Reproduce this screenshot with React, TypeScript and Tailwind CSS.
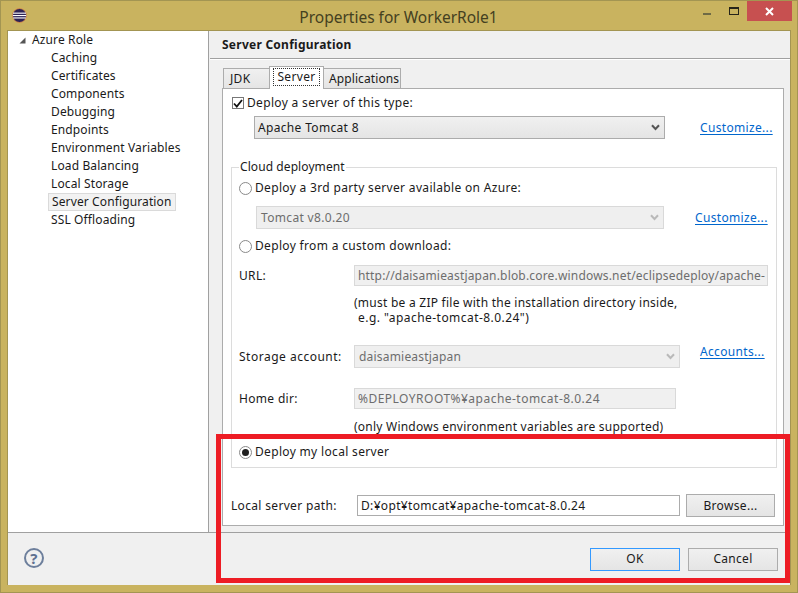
const navItems = [
  'Caching',
  'Certificates',
  'Components',
  'Debugging',
  'Endpoints',
  'Environment Variables',
  'Load Balancing',
  'Local Storage',
  'Server Configuration',
  'SSL Offloading',
];

function Chevron({ disabled }: { disabled?: boolean }) {
  return (
    <svg width="9" height="7" viewBox="0 0 9 7" className="shrink-0">
      <path d="M1 1.2 L4.5 5 L8 1.2" fill="none" stroke={disabled ? '#b9b9b9' : '#555555'} strokeWidth="2" />
    </svg>
  );
}

function Radio({ checked }: { checked?: boolean }) {
  return (
    <span className="flex h-[13px] w-[13px] shrink-0 items-center justify-center rounded-full border border-[#8a8a8a] bg-white">
      {checked && <span className="h-[7px] w-[7px] rounded-full bg-[#1f1f1f]" />}
    </span>
  );
}

function CustomLink({ children }: { children: string }) {
  return <a className="cursor-pointer text-[#0066cc] underline underline-offset-2">{children}</a>;
}

function ComboBox({ value, disabled, className }: { value: string; disabled?: boolean; className: string }) {
  return (
    <div
      className={
        'flex h-[23px] items-center justify-between border pr-[4px] ' +
        (disabled
          ? 'border-[#d9d9d9] bg-[#efefef] pl-[4px] text-[#6d6d6d] '
          : 'border-[#acacac] bg-gradient-to-b from-[#f0f0f0] to-[#e5e5e5] pl-[3px] ') +
        className
      }
    >
      <span>{value}</span>
      <Chevron disabled={disabled} />
    </div>
  );
}

function ReadOnlyField({ value, className }: { value: string; className: string }) {
  return (
    <div className={'flex h-[21px] items-center overflow-hidden whitespace-nowrap border border-[#d9d9d9] bg-[#f0f0f0] pl-[3px] text-[#6d6d6d] ' + className}>
      {value}
    </div>
  );
}

function DialogButton({ label, focused, className }: { label: string; focused?: boolean; className: string }) {
  return (
    <button
      className={
        'h-[23px] border bg-gradient-to-b from-[#f0f0f0] to-[#e5e5e5] ' +
        (focused ? 'border-[#3399ff] ' : 'border-[#acacac] ') +
        className
      }
    >
      {label}
    </button>
  );
}

function EclipseLogo() {
  return (
    <svg width="15" height="15" viewBox="0 0 15 15">
      <circle cx="7.5" cy="7.5" r="7" fill="#2c2255" stroke="#e8964a" strokeWidth="0.8" />
      <rect x="1" y="4.6" width="13" height="1.1" fill="#ffffff" />
      <rect x="0.8" y="7" width="13.4" height="1.1" fill="#ffffff" />
      <rect x="1.2" y="9.4" width="12.6" height="1.1" fill="#ffffff" />
    </svg>
  );
}

export default function App() {
  return (
    <div className="relative flex h-[593px] w-[798px] flex-col overflow-hidden border border-[#a39552] bg-[#c9b35f] font-['Noto_Sans',sans-serif] text-[12px] leading-none text-[#1a1a1a]">
      {/* title bar */}
      <div className="flex h-[29px] shrink-0 items-start">
        <div className="ml-[11px] mt-[7px]">
          <EclipseLogo />
        </div>
        <div className="flex-1 pl-[67px] pt-[6px] text-center text-[15.5px] leading-[20px] text-[#44401f]">Properties for WorkerRole1</div>
        <div className="flex items-start">
          <div className="mr-[18px] mt-[12px] h-[2px] w-[8px] bg-[#6f6a45]" />
          <div className="mr-[8px] mt-[6px] h-[8px] w-[10px] border border-t-2 border-[#26241a]" />
          <div className="flex h-[20px] w-[45px] items-center justify-center bg-[#c75050] text-white">
            <svg width="9" height="9" viewBox="0 0 9 9">
              <path d="M1 1 L8 8 M8 1 L1 8" stroke="#ffffff" strokeWidth="2" />
            </svg>
          </div>
          <div className="w-[5px]" />
        </div>
      </div>

      {/* client area */}
      <div className="mx-[6px] flex min-h-0 flex-1 flex-col border-l border-r border-t border-[#a39552] bg-[#f0f0f0]">
        <div className="flex h-[501px] shrink-0">
          {/* tree */}
          <div className="w-[201px] shrink-0 border-r border-[#a0a0a0] bg-white tracking-[0.12px]">
            <div className="flex h-[18px] items-center">
              <svg width="7" height="7" viewBox="0 0 7 7" className="ml-[11px] mr-[6px]">
                <path d="M6.5 0.5 V6.5 H0.5 Z" fill="#555555" />
              </svg>
              <span>Azure Role</span>
            </div>
            <ul>
              {navItems.map((item) => (
                <li key={item} className="flex h-[18px] items-center pl-[40px]">
                  <span
                    className={
                      'flex h-[18px] items-center px-[3px] ' +
                      (item === 'Server Configuration' ? 'border border-[#dadada] bg-[#f2f2f2] px-[3px]' : '')
                    }
                  >
                    {item}
                  </span>
                </li>
              ))}
            </ul>
          </div>

          {/* right page */}
          <div className="flex min-w-0 flex-1 flex-col tracking-[0.33px]">
            <div className="ml-[1px] flex h-[28px] shrink-0 items-center border-b border-[#a0a0a0] pl-[12px] font-bold tracking-[0.25px]">Server Configuration</div>
            <div className="ml-[1px] h-[1px] shrink-0 bg-white" />

            {/* tabs */}
            <div className="mt-[6px] flex h-[22px] shrink-0 items-end pl-[14px]">
              <div className="flex h-[20px] w-[47px] items-center border border-b-0 border-[#acacac] bg-gradient-to-b from-[#f0f0f0] to-[#e5e5e5] pl-[6px]">JDK</div>
              <div className="z-10 -mb-[1px] -ml-[1px] flex h-[23px] w-[55px] items-start justify-center border border-b-0 border-[#acacac] bg-white pt-[1px]">
                <span className="border border-dotted border-[#333333] px-[3px] py-[2px]">Server</span>
              </div>
              <div className="-ml-[1px] flex h-[20px] w-[78px] items-center border border-b-0 border-[#acacac] bg-gradient-to-b from-[#f0f0f0] to-[#e5e5e5] pl-[5px] tracking-[0.1px]">Applications</div>
            </div>

            {/* tab body */}
            <div className="ml-[13px] mr-[6px] flex h-[438px] shrink-0 flex-col border border-[#acacac] bg-white">
              <div className="ml-[9px] mt-[7px] flex h-[14px] items-center gap-[3px]">
                <span className="flex h-[12px] w-[12px] items-center justify-center border border-[#777777] bg-white">
                  <svg width="10" height="9" viewBox="0 0 10 9">
                    <path d="M1 4.5 L3.8 7.5 L9 1" fill="none" stroke="#111111" strokeWidth="1.8" />
                  </svg>
                </span>
                <span>Deploy a server of this type:</span>
              </div>

              <div className="mt-[6px] flex items-center">
                <ComboBox value="Apache Tomcat 8" className="ml-[31px] w-[411px]" />
                <div className="ml-[35px]">
                  <CustomLink>Customize...</CustomLink>
                </div>
              </div>

              <fieldset className="ml-[8px] mt-[21px] h-[308px] w-[546px] border border-[#dcdcdc] px-[7px]">
                <legend className="px-[1px] leading-[14px] tracking-[0.08px]">Cloud deployment</legend>

                <div className="mt-[7px] flex h-[14px] items-center gap-[3px]">
                  <Radio />
                  <span>Deploy a 3rd party server available on Azure:</span>
                </div>
                <div className="mt-[11px] flex items-center">
                  <ComboBox value="Tomcat v8.0.20" disabled className="ml-[17px] w-[408px]" />
                  <div className="ml-[31px]">
                    <CustomLink>Customize...</CustomLink>
                  </div>
                </div>

                <div className="mt-[10px] flex h-[14px] items-center gap-[3px]">
                  <Radio />
                  <span>Deploy from a custom download:</span>
                </div>

                <div className="mt-[12px] flex items-center">
                  <span className="w-[115px]">URL:</span>
                  <ReadOnlyField value="http://daisamieastjapan.blob.core.windows.net/eclipsedeploy/apache-" className="w-[414px] tracking-[0.18px]" />
                </div>
                <div className="ml-[115px] mt-[9px] leading-[15px]">
                  <div className="tracking-[0.25px]">(must be a ZIP file with the installation directory inside,</div>
                  <div className="pl-[4px] tracking-[0.45px]">e.g. &quot;apache-tomcat-8.0.24&quot;)</div>
                </div>

                <div className="mt-[20px] flex items-center">
                  <span className="w-[115px] tracking-[0.5px]">Storage account:</span>
                  <ComboBox value="daisamieastjapan" disabled className="w-[326px] tracking-[0.2px]" />
                  <div className="-mt-[10px] ml-[20px]">
                    <CustomLink>Accounts...</CustomLink>
                  </div>
                </div>

                <div className="mt-[20px] flex items-center">
                  <span className="w-[115px]">Home dir:</span>
                  <ReadOnlyField value="%DEPLOYROOT%¥apache-tomcat-8.0.24" className="w-[322px] tracking-[0.48px]" />
                </div>
                <div className="ml-[115px] mt-[10px] leading-[15px] tracking-[0.23px]">(only Windows environment variables are supported)</div>

                <div className="mt-[11px] flex h-[14px] items-center gap-[3px]">
                  <Radio checked />
                  <span>Deploy my local server</span>
                </div>
              </fieldset>

              <div className="ml-[8px] mt-[26px] flex items-center">
                <span className="w-[126px]">Local server path:</span>
                <div className="flex h-[21px] w-[323px] items-center border border-[#acacac] bg-white pl-[3px]">D:¥opt¥tomcat¥apache-tomcat-8.0.24</div>
                <DialogButton label="Browse..." className="ml-[6px] w-[89px]" />
              </div>
            </div>
          </div>
        </div>

        {/* footer */}
        <div className="flex h-[53px] shrink-0 items-center border-t border-[#a0a0a0] pl-[16px] pr-[12px] tracking-[0.3px]">
          <div className="-mt-[2px] flex h-[20px] w-[20px] items-center justify-center rounded-full border-2 border-[#6d7f9c] text-[15px] font-bold text-[#5f7191]">?</div>
          <div className="flex-1" />
          <DialogButton label="OK" focused className="w-[90px]" />
          <DialogButton label="Cancel" className="ml-[8px] w-[90px]" />
        </div>
      </div>
      <div className="h-[7px] shrink-0" />

      {/* red annotation drawn over the screenshot */}
      <div className="absolute left-[215px] top-[433px] h-[149px] w-[574px] border-[5px] border-[#ed1c24]" />
    </div>
  );
}
